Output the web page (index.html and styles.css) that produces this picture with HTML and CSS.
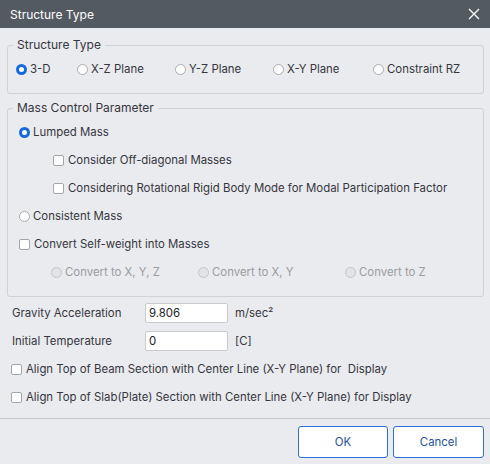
FILE: index.html
```html
<!DOCTYPE html>
<html>
<head>
<meta charset="utf-8">
<link rel="stylesheet" href="styles.css">
</head>
<body>
<div class="dialog">
  <div class="titlebar">
    <span class="title">Structure Type</span>
    <svg class="close" width="12" height="12" viewBox="0 0 12 12"><path d="M1 1 L11 11 M11 1 L1 11" stroke="#fff" stroke-width="1.3" fill="none"/></svg>
  </div>
  <div class="content">
    <fieldset class="group g1">
      <legend>Structure Type</legend>
      <div class="row r-type">
        <label class="opt w61"><span class="radio checked"></span>3-D</label>
        <label class="opt w98"><span class="radio"></span>X-Z Plane</label>
        <label class="opt w98"><span class="radio"></span>Y-Z Plane</label>
        <label class="opt w100"><span class="radio"></span>X-Y Plane</label>
        <label class="opt"><span class="radio"></span>Constraint RZ</label>
      </div>
    </fieldset>
    <fieldset class="group g2">
      <legend>Mass Control Parameter</legend>
      <div class="row r-main"><label class="opt"><span class="radio checked"></span>Lumped Mass</label></div>
      <div class="row r-sub"><label class="opt"><span class="check"></span>Consider Off-diagonal Masses</label></div>
      <div class="row r-sub"><label class="opt"><span class="check"></span>Considering Rotational Rigid Body Mode for Modal Participation Factor</label></div>
      <div class="row r-main"><label class="opt"><span class="radio"></span>Consistent Mass</label></div>
      <div class="row r-main"><label class="opt"><span class="check"></span>Convert Self-weight into Masses</label></div>
      <div class="row r-conv">
        <label class="opt w147 disabled"><span class="radio dis"></span>Convert to X, Y, Z</label>
        <label class="opt w147 disabled"><span class="radio dis"></span>Convert to X, Y</label>
        <label class="opt disabled"><span class="radio dis"></span>Convert to Z</label>
      </div>
    </fieldset>
    <div class="fields">
      <div class="row r-field">
        <span class="flabel">Gravity Acceleration</span>
        <span class="input">9.806</span>
        <span class="unit">m/sec²</span>
      </div>
      <div class="row r-field">
        <span class="flabel">Initial Temperature</span>
        <span class="input">0</span>
        <span class="unit">[C]</span>
      </div>
      <div class="row r-align"><label class="opt"><span class="check"></span>Align Top of Beam Section with Center Line (X-Y Plane) for&nbsp; Display</label></div>
      <div class="row r-align"><label class="opt"><span class="check"></span>Align Top of Slab(Plate) Section with Center Line (X-Y Plane) for Display</label></div>
    </div>
  </div>
  <div class="footer">
    <button class="btn">OK</button>
    <button class="btn">Cancel</button>
  </div>
</div>
</body>
</html>
```

FILE: styles.css
```css
* { box-sizing: border-box; }
html, body { margin: 0; padding: 0; }
body {
  font-family: Inter, "Noto Sans", sans-serif;
  font-size: 11.4px;
  color: #363640;
  background: #eaebee;
}
.dialog {
  width: 490px;
  height: 464px;
  background: #eaebee;
  display: flex;
  flex-direction: column;
}
.titlebar {
  height: 28px;
  background: #545a62;
  color: #fff;
  display: flex;
  align-items: center;
  justify-content: space-between;
  padding: 0 10px 0 10px;
  flex: none;
}
.title { font-size: 12px; }
.close { display: block; }
.content {
  padding: 0 6px 0 7px;
  flex: 1;
}
.group {
  margin: 0;
  border: 1px solid #d0d1d5;
  border-radius: 3px;
  padding: 3px 0 10px 0;
  min-width: 0;
}
.group legend {
  margin-left: 5px;
  padding: 0 4px;
  line-height: 14px;
  font-size: 12px;
}
.g1 { margin-top: 10px; }
.g2 { margin-top: 7px; padding-bottom: 10px; }
.row {
  height: 28px;
  display: flex;
  align-items: center;
}
.r-type { padding-left: 8px; }
.r-main { padding-left: 11px; }
.r-sub { padding-left: 45px; }
.r-conv { padding-left: 43px; }
.opt {
  display: flex;
  align-items: center;
  white-space: nowrap;
}
.w61 { width: 61px; }
.w98 { width: 98px; }
.w100 { width: 100px; }
.w147 { width: 147px; }
.radio {
  width: 11px;
  height: 11px;
  border-radius: 50%;
  border: 1px solid #a9abb0;
  background: #fff;
  margin-right: 3px;
  flex: none;
}
.radio.checked {
  border: 3px solid #1769e0;
  background: #fff;
}
.radio.dis {
  background: #e2e3e6;
  border-color: #c3c5c9;
}
.disabled { color: #9a9ca2; }
.check {
  width: 11px;
  height: 11px;
  border-radius: 2px;
  border: 1px solid #a3a5aa;
  background: #fff;
  margin-right: 4px;
  flex: none;
}
.fields { margin-top: 2px; }
.r-field { padding-left: 5px; }
.flabel { width: 133px; }
.input {
  width: 83px;
  height: 20px;
  background: #fff;
  border: 1px solid #c9cacd;
  border-radius: 2px;
  padding-left: 3px;
  display: flex;
  align-items: center;
  color: #222;
}
.unit { margin-left: 7px; }
.r-align { padding-left: 4px; }
.footer {
  flex: none;
  border-top: 1px solid #c7c8cc;
  padding: 7px 6px 6px 0;
  display: flex;
  justify-content: flex-end;
  gap: 5px;
}
.btn {
  width: 90px;
  height: 32px;
  background: #fff;
  border: 1px solid #2c6fd8;
  border-radius: 3px;
  font-family: inherit;
  font-size: 11.4px;
  color: #24529f;
  padding: 0;
}
.btn + .btn { width: 91px; }
```
